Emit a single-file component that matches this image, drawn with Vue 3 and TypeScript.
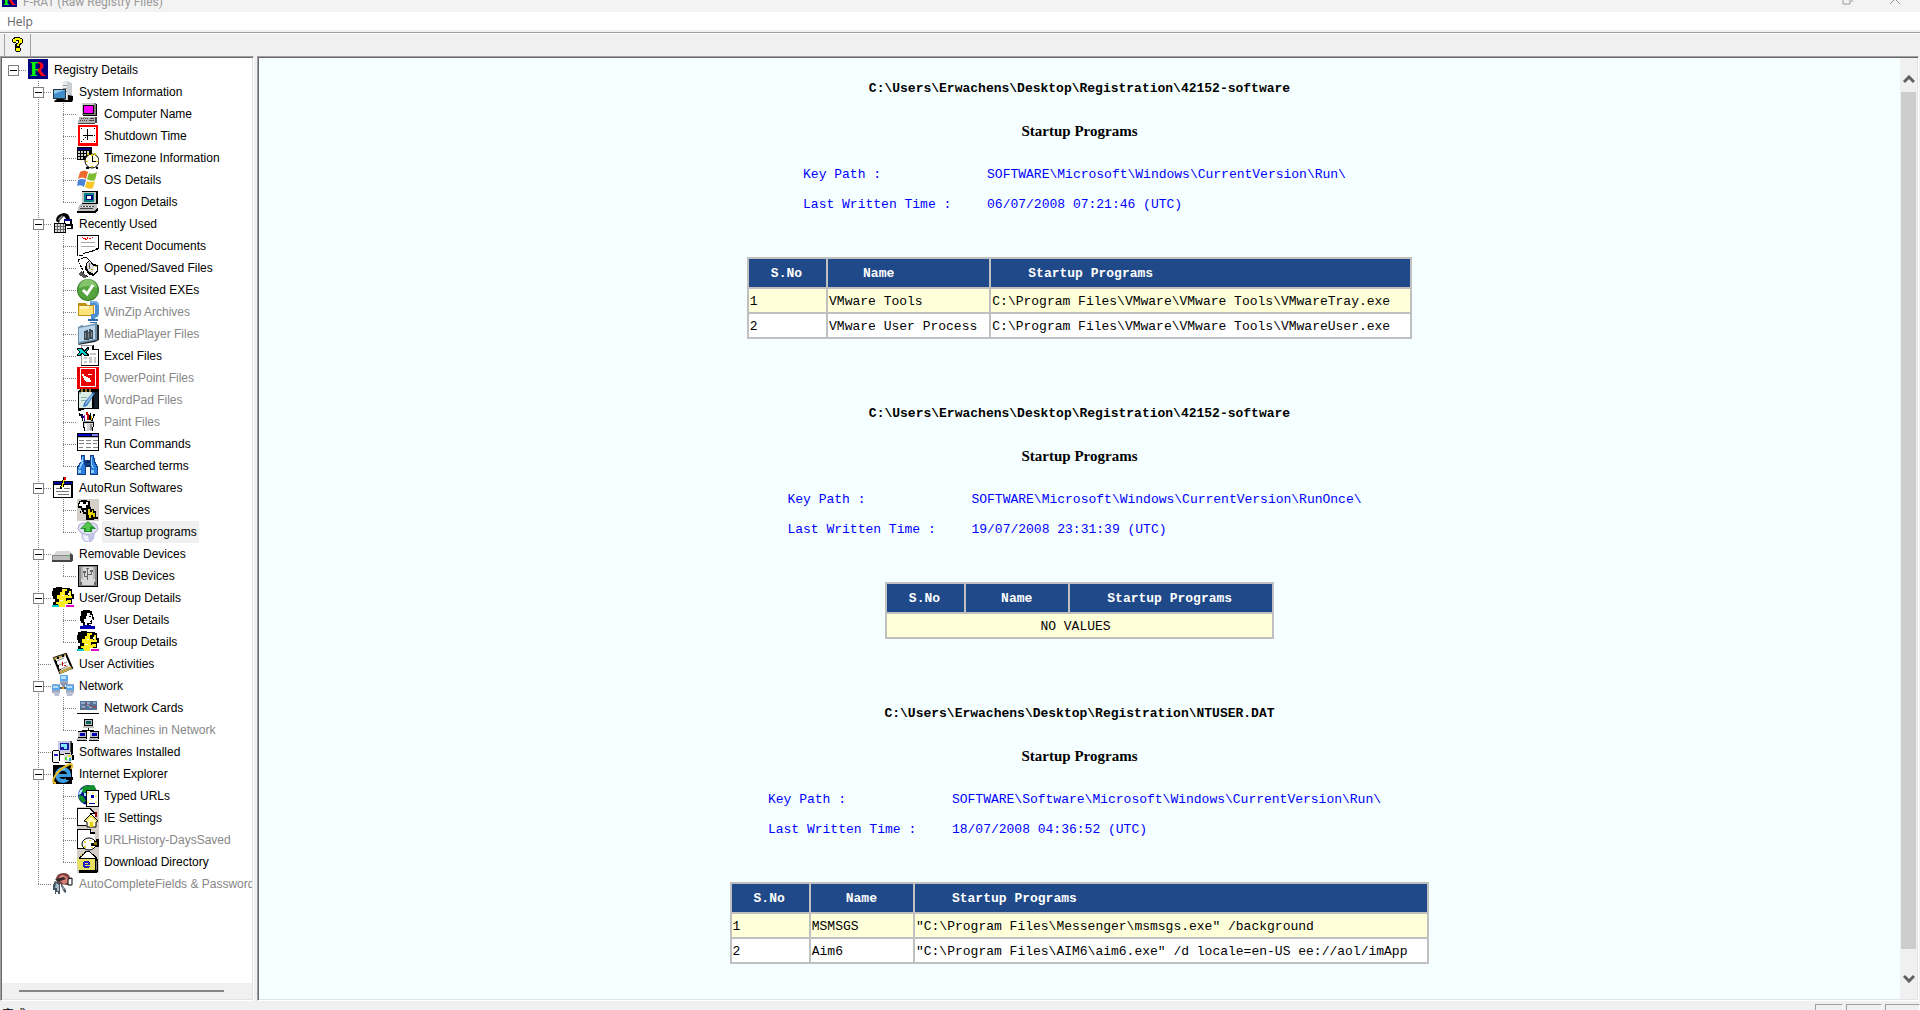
<script setup lang="ts">
import { computed, ref } from 'vue'

interface TreeItem {
  label: string
  level: 0 | 1 | 2
  icon: string
  off?: boolean
  parent?: boolean
}

interface Report {
  file: string
  keyPath: string
  written: string
  rows: [string, string][]
}

const icons: Record<string, string> = {
  computer: `<path fill="#808080" d="M5 0h14v12H5z"/><path fill="#c8c8c8" d="M5 0h12v11H5z"/><path fill="#000" d="M6 2h11v9H6zM19 1h1v12h-1zM6 12h13v1H6z"/><path fill="#f0f" d="M7 3h9v7H7z"/><path fill="#b4b4b4" d="M2 14h16v6H1v-3h1z"/><path fill="#fff" d="M2 13h15v1H2z"/><path fill="#444" d="M4 15h1v1H4zm2 0h1v1H6zm2 0h1v1H8zm2 0h1v1h-1zm3 0h4v1h-4zM3 17h1v1H3zm2 0h1v1H5zm2 0h1v1H7zm2 0h1v1H9zm3 0h5v1h-5zM1 20h17v1H1zM18 14h2v6h-2z"/>`,
  server: `<g shape-rendering="auto"><path fill="#c9ced2" d="M10 2l5-2 5 2v16l-5 2-5-2z"/><path fill="#eef1f3" d="M10 2l5-1v18l-5-2z"/><path fill="#8d959a" d="M11 4h4v1h-4zm0 3h4v1h-4zm0 3h4v1h-4z"/><path fill="#24323c" d="M1 8h13v10H1z"/><path fill="#3f8ccb" d="M2 9h11v8H2z"/><path fill="#8fc8ef" d="M2 9h11l-11 4z"/><path d="M16 14l5 1v4l-5 1zM2 20l3-2h6l4 1 6 0-1 2H3z"/></g>`,
  clock: `<path fill="#f00" d="M1 0h20v21H1z"/><path fill="#fff" d="M3 2h16v16H3z"/><path d="M10 4h1v6h5v1h-5v4h-1v-4H6v-1h4zM4 3h1v1H4zm13 0h1v1h-1zM4 16h1v1H4zm13 0h1v1h-1zM17 10h1v1h-1zM8 12h1v1H8zM6 14h1v1H6z"/>`,
  timezone: `<path d="M0 0h15v13H0z"/><path fill="#000080" d="M1 1h13v2H1z"/><path fill="#d0d0d0" d="M1 4h2v2H1zm3 0h2v2H4zm3 0h2v2H7zm3 0h2v2h-2zM1 7h2v2H1zm3 0h2v2H4zm3 0h2v2H7zM1 10h2v2H1zm3 0h2v2H4z"/><g shape-rendering="auto"><circle cx="15" cy="14" r="7" fill="#fffde8" stroke="#000"/></g><path fill="#d8c800" d="M10 6h2v2h-2zm7 0h2v2h-2zM14 7h2v2h-2zM9 14h2v1H9zm10 0h2v1h-2zM14 19h2v1h-2z"/><path d="M15 9h1v5h3v1h-4zM9 20h3v2H9zm10 0h2v2h-2z"/>`,
  windows: `<g shape-rendering="auto"><path fill="#ef6a2c" d="M3 3q4-3 8 0L9 10q-4-3-8 0z"/><path fill="#7dbb32" d="M12 4q4 2 8-1l-2 8q-4 2-8-1z"/><path fill="#4b83d6" d="M1 11q4-2 8 0l-2 7q-3-3-7-1z"/><path fill="#f8c828" d="M10 12q4 2 8 0l-2 7q-4 2-8-1z"/></g>`,
  logon: `<path d="M5 0h15l1 1v12H5z"/><path fill="#c0c8c8" d="M5 1h14v11H5z"/><path fill="#008080" d="M7 2h10v9H7z"/><path fill="#000080" d="M9 4h7v5H9z"/><path fill="#fff" d="M10 5h4v3h-4z"/><path fill="#c0c0c0" d="M3 13h17v5l-2 2H1v-3z"/><path fill="#444" d="M4 15h13v1H4zm-1 2h13v1H3z"/><path fill="#fff" d="M5 15h1v1H5zm3 0h1v1H8zm3 0h1v1h-1zm3 0h1v1h-1z"/><path d="M0 20h18l3-4v3l-2 3H0z"/>`,
  recent: `<g shape-rendering="auto"><path d="M4 8q0-7 8-8 5 0 6 6h-4l-2-3-4 4-1 3z"/><path fill="#777" d="M6 6l4-4 1 2-4 4z"/></g><path d="M12 6h8v7h-8z"/><path fill="#000080" d="M12 6h7v2h-7z"/><path fill="#fff" d="M13 8h5v3h-5z"/><path d="M9 10h5v2H9zM15 11h6v5h-6z"/><path fill="#fff" d="M15 13h4v2h-4z"/><path d="M2 10h12v10H2z"/><path fill="#ddd" d="M3 11h10v8H3z"/><path fill="#666" d="M3 13h10v1H3zm0 3h10v1H3zM5 11h1v8H5zm3 0h1v8H8zm3 0h1v8h-1z"/>`,
  docs: `<path fill="#fff" d="M1 1h20v14L8 20H1z"/><path d="M0 0h22v1H0zM0 0h1v21H0zM21 0h1v14h-1zM18 14h3v1h-3zM15 15h3v1h-3zM12 16h4v1h-4zM8 17h4v1H8zM6 18h2v1H6zM2 20h4v1H2zM19 13h2v2h-2z"/><path fill="#aaa" d="M4 7h14v1H4zm0 4h14v1H4z"/><path fill="#e00" d="M5 2h1v1H5zm2 1h2v1H7zm3-1h1v2h-1zm2 1h2v1h-2zm3-1h1v1h-1zM6 3h1v1H6zM8 4h2v1H8z"/>`,
  saved: `<path fill="none" stroke="#000" stroke-dasharray="2 1" d="M1 3l8-3 4 4M1 3l7 15 4 2"/><path d="M9 6l4-3 3 4 5 1v6l-4 5-5-1-4-6z"/><path fill="#ddd" d="M10 6l3-2 3 5 3 2-3 5-4-1-2-4z"/><path fill="#fff" d="M17 9h3v4l-3 4h-1z"/><path fill="#d9a400" d="M18 9h2v1h-2zm-4 3h2v1h-2z"/><path fill="#555" d="M1 17l3-3 7 6-4 1zM12 6h1v6h-1z"/>`,
  check: `<g shape-rendering="auto"><circle cx="11" cy="11" r="11" fill="#2f7d26"/><circle cx="11" cy="11" r="10" fill="#55a33c"/><path fill="#83c36c" d="M2 9a9 9 0 0118 0q-8-4-18 0z"/><path fill="none" stroke="#fff" stroke-width="3" d="M6 11l4 4 6-9"/></g>`,
  zip: `<path fill="#c48e13" d="M1 2h7l2 2h7v11H1z"/><path fill="#ffe27a" d="M2 5h14v9H2z"/><path fill="#fff3b8" d="M3 5h9v3H3z"/><g shape-rendering="auto"><path fill="none" stroke="#4b8fd0" stroke-width="4" d="M13 2h5q2 0 2 3v7q0 3-4 3v5"/><path fill="none" stroke="#a9d3f4" stroke-width="1" d="M13 1h6q2 0 2 3"/></g><path fill="#286aa8" d="M11 18h10v2H11zM13 21h7v1h-7z"/>`,
  media: `<g shape-rendering="auto"><path fill="#202830" d="M19 1l3 1v15l-4 2L1 22z"/><path fill="#6f8fa9" d="M1 4l4-2 2 1 13-3v17L1 21z"/><path fill="#b7d4ea" d="M2 5l16-3v14L2 19z"/></g><path fill="#3f4b52" d="M7 8h2v-1h2v2h1V6h2v1h2v9l-9 1z"/><path fill="#7e8d95" d="M8 10h1v5H8zm3 0h1v5h-1zm3-1h1v5h-1z"/>`,
  excel: `<path fill="#fff" d="M5 0h11l5 4v17H5z"/><path fill="#999" d="M4 0h1v21H4zM5 0h11v1H5z"/><path d="M16 0h1v4h4v1h-6V1zM21 4h1v17h-1zM4 20h18v1H4z"/><path fill="#c8c8c8" d="M7 8h5v2H7zm6 0h6v2h-6zm-6 4h3v2H7zm5 0h3v6h-3zm5 0h2v6h-2zm-10 4h3v2H7z"/><path d="M0 3h5l2 2 3-3h2v2L9 7l3 3v1H7L5 9l-2 2H0V9l2-2-2-2z"/><path fill="#00d0d0" d="M1 4h3l3 3 3-3h1L8 7l2 3H7L5 8l-3 2H1l2-3z"/>`,
  powerpoint: `<path fill="#e00" d="M0 0h22v22H0z"/><path fill="#800" d="M1 3h1v1H1zm0 5h1v1H1zm0 6h1v1H1zm19-9h1v1h-1zm0 7h1v1h-1zm0 6h1v1h-1zM9 20h1v1H9zm5 0h1v1h-1z"/><path fill="#fff" d="M3 1h16v1H3zm0 18h16v1H3zM3 2h1v17H3zm15 0h1v17h-1zM5 7h2v2h2v1h2v1h2v2h1v2H9v-1H8v-1H7v-2H6V9H5zM11 7h4v1h-4z"/>`,
  wordpad: `<path d="M3 0h19v20H9l-7 2H1V2z"/><path fill="#dcebe6" d="M2 3h13v16H2z"/><path fill="#8fb3a5" d="M2 3h2v2H2zM4 8h6v1H4zm0 3h5v1H4z"/><path fill="#8b7a3d" d="M4 0h2v3H4zm4 0h2v3H8zm4 0h2v3h-2z"/><path fill="#16202c" d="M17 3h4v16h-4z"/><g shape-rendering="auto"><path fill="#3978bf" d="M16 3l2 1-8 13-4 1 1-4z"/><path fill="#9ac5ec" d="M15 5l1 1-7 10-1-1z"/></g>`,
  paint: `<path d="M6 11h11v2l-1 7H7L6 13z"/><path fill="#d4d4d4" d="M7 12h9l-1 8H8z"/><path fill="#fff" d="M8 13h2v6H8z"/><path fill="#909090" d="M13 13h2v6h-2zM6 10h11v1H6z"/><path fill="#000080" d="M4 3h2v2h1v2h1v3H7V7H5V5H4z"/><path fill="#c00" d="M9 1h2v2h1v6h-2V4H9z"/><path d="M2 2h1v1h1v1h1v3h1v3H5V7H4V5H2zM13 2h1v7h-2V4h1zm3 1h2v2h-1v2h-1v3h-2V7h2z"/><path fill="#e0c000" d="M14 5h1v4h-1z"/><path fill="#a0a" d="M7 4h1v4H7z"/>`,
  run: `<path d="M0 0h22v18H0z"/><path fill="#fff" d="M1 4h20v13H1z"/><path fill="#0000c8" d="M1 1h13v2H1z"/><path fill="#8080ff" d="M15 1h6v2h-6z"/><path fill="#c0c0c0" d="M1 4h20v1H1z"/><path fill="#808080" d="M2 7h5v1H2zm7 0h5v1H9zm7 0h5v1h-5zM2 10h5v1H2zm7 0h5v1H9zm7 0h4v1h-4zM2 14h4v1H2zm7 0h5v1H9zm7 0h5v1h-5z"/>`,
  search: `<path fill="#123e86" d="M4 0h4v5h5V0h4l1 6 3 6v8h-8v-8H9v8H0v-8l4-6z"/><path fill="#2b80df" d="M5 1h2v6l1 5v7H1v-6l3-6zm9 0h2l1 6 3 6v6h-6v-7z"/><path fill="#91cbff" d="M5 2h1v6l-3 6H2l2-6zm9 0h1v7l2 4h-2l-1-4zM1 15h3v3H1zm13 0h3v3h-3z"/><path fill="#0c2c66" d="M9 6h4v2H9zM9 10h4v2H9z"/>`,
  autorun: `<path d="M1 4h20v17H1z"/><path fill="#0000a0" d="M2 5h18v2H2z"/><path fill="#fff" d="M2 8h17v12H2z"/><path fill="#777" d="M4 11h5v1H4zm8 0h6v1h-6zm-8 3h13v1H4zm2 3h11v1H6z"/><path d="M11 0h3v3h-1v3h-1v4h-2v2H8V9h1V6h1V3h1z"/><path fill="#f5e000" d="M11 3h2v1h-1v3h-1v3H9V9h1V6h1z"/><path fill="#e00" d="M12 0h2v3h-2z"/>`,
  services: `<path fill="#d4d0c8" d="M0 0h22v22H0z"/><path d="M2 2h2V1h6v1h3v7h-2v2H4V9H1V4h1z"/><path fill="#fff" d="M3 3h3v2h3V3h2v3H9v3H5V7H2V5h1z"/><path d="M9 9h2V8h3v2h3v2h2v7h-2v2h-6v-2H9z"/><path fill="#e4d100" d="M11 10h2v3h2v-2h1v3h2v4h-2v-2h-2v3h-2v-3h-1z"/><path d="M5 10h2v3h3v2H6v-2H5zM17 18h4v2h-4zM9 19h4v2H9zM3 12h1v2H3z"/>`,
  startup: `<g shape-rendering="auto"><path fill="#dfe0f2" stroke="#a9a9cc" d="M2 4l3-2h12l3 2 1 4-3 4-7 2-7-2-3-4z"/><path fill="#c3c5e4" d="M4 12l7 2 7-2-1 6-3 3H8l-3-3z"/><path fill="#f3f3ff" d="M6 14l5 1 1 5H9l-2-2z"/><path fill="#23912a" d="M11 0l8 8h-4v3H7V8H3z"/><path fill="#52c64d" d="M11 1l5 5h-3v4H9V7H5z"/></g>`,
  drive: `<g shape-rendering="auto"><path fill="#d8d8d8" d="M1 12l4-4h13l3 4z"/><path fill="#8a8a8a" d="M0 12h21v6H0z"/><path fill="#bcbcbc" d="M1 13h17v4H1z"/><path fill="#444" d="M18 10l3 2v6h-3zM0 17h20v2H0z"/></g><path fill="#40b840" d="M14 12h3v1h-3z"/>`,
  usb: `<path d="M1 0h20v22H1z"/><path fill="#888" d="M2 1h18v20H2z"/><path fill="#d8d8d8" d="M4 2h14v18H4z"/><path fill="#b4b4b4" d="M4 2h2v12H4zm12 0h2v12h-2z"/><path fill="#666" d="M10 4h1v11h-1zM7 7h1v4h3v1H7zM14 6h1v4h-4V9h3zM9 3h3v1H9zM6 6h3v2H6zm7-1h3v2h-3zM3 17h2v3H3zm14 0h2v3h-2z"/>`,
  group: `<path d="M1 1h3V0h6v1h8v1h2v5h2v5h-2v5h-7v3H1v-5h2v-3H1V9H0V4h1z"/><path fill="#ffed20" d="M10 2h5v2h-2v4h3v3h-2v3h2v3h-3v3H6v-3H4v-2h3v-3H5V8h3V5h2z"/><path fill="#ffed20" d="M17 4h2v5h1v2h-4V9h1zM15 13h4v3h-4z"/><path fill="#fff" d="M16 6h2v2h-2zM10 8h2v1h-2zM8 13h3v1H8z"/><path fill="#00d0d0" d="M0 18h7v2H0z"/><path fill="#e000c8" d="M14 18h8v2h-8z"/>`,
  user: `<path d="M4 2h2V1h7v1h2v3h1v3h1v3h-2v4h-3v2H6v-3H4v-2H3V7h1z"/><path fill="#fff" d="M10 4h3v2h2v4h1v1h-2v3h-4v2H8v-3H7v-3h2V7h1z"/><path d="M12 7h2v1h-2zM13 12h2v1h-2z"/><path fill="#0000a8" d="M3 17h3v-1h8v1h4v3H3z"/><path fill="#00c" d="M7 18h8v1H7z"/>`,
  activities: `<g shape-rendering="auto"><path fill="#fff" stroke="#000" stroke-width="2" d="M2 5l12-4 6 14-12 5z"/><path fill="#bba652" d="M1 5L14 1v2L3 7zM7 18l12-5 1 3-12 5z"/><path fill="none" stroke="#888" d="M5 8l7-3M7 12l8-3M9 16l7-3"/></g><path d="M4 8h1v2H4zM6 12h1v2H6zM8 16h1v1H8zM10 2h2v2h-2zM5 4h2v2H5z"/><path fill="#c00" d="M10 9h1v4h-1zM12 12h2v1h-2z"/>`,
  network: `<g shape-rendering="auto"><path fill="#9da8bf" d="M8 1h8v8H8zM0 9h8v9H0zM14 9h8v9h-8z"/><path fill="#5aa8ed" d="M8 0h8v6H8zM0 10h8v5H0zM14 10h8v5h-8z"/><path fill="#b8defb" d="M9 1h5v3H9zM1 11h5v2H1zM15 11h5v2h-5z"/><path fill="#8a92ae" d="M9 8h6v2H9zM10 9h3v3h-3z"/><path fill="#b9bfd2" d="M1 17h7l-1 4H3zM14 17h8l-2 4h-5z"/><path fill="#555" d="M8 12h6v2H8z"/><path fill="#e29b30" d="M10 12h2v2h-2z"/></g>`,
  card: `<path fill="#52749b" d="M3 4h17v9H3z"/><path fill="#91adcb" d="M4 5h4v2H4zm6 0h3v2h-3zm6 0h3v2h-3zM5 9h3v2H5zm7 0h3v2h-3z"/><path fill="#924e5d" d="M8 6h2v2H8zm5 2h2v2h-2zm-8 3h3v1H5zm11-2h3v2h-3z"/><path fill="#b9a7b9" d="M10 8h2v1h-2zm-6 0h1v1H4z"/><path d="M0 16h22v1H0z"/>`,
  machines: `<path d="M7 0h9v9H7z"/><path fill="#c0c0c0" d="M8 1h7v5H8zM6 7h11v2H6z"/><path fill="#006060" d="M9 2h5v3H9z"/><path d="M11 9h1v2h5v2h-1v-1H6v1H5v-2h6zM1 12h9v8H1zm12 0h9v8h-9z"/><path fill="#c0c0c0" d="M1 13h8v5H1zm12 0h8v5h-8zM0 19h9v2H0zm12 0h9v2h-9z"/><path fill="#0000b0" d="M3 14h5v3H3zm12 0h5v3h-5z"/><path d="M0 21h10v1H0zm12 0h10v1H12z"/>`,
  software: `<path fill="#555" d="M6 0h14v12H6z"/><path fill="#c8cde4" d="M6 0h12v11H6z"/><path fill="#1818a0" d="M8 2h9v7H8z"/><path fill="#80e8ff" d="M9 3h6v3H9zM12 6h3v2h-3z"/><path fill="#d0d0d8" d="M8 11h13v3H8z"/><path d="M19 2h2v11h-2zM8 13h12v1H8zM1 9h6v1H1zM0 10h1v11H0zM7 10h1v10H7zM1 21h6v1H1z"/><path fill="#f4f4f4" d="M1 10h6v11H1z"/><path fill="#2020c8" d="M2 13h4v2H2z"/><path d="M13 12h5v1h-5zM20 14h2v5h-2zM13 21h6v1h-6z"/><path fill="#d8dcd8" d="M12 13h7v1h1v6h-1v1h-6v-1h-1z"/><path fill="#50dc40" d="M13 16h2v3h-2z"/><path fill="#e5d830" d="M16 14h3v2h-3z"/><path fill="#20a8d0" d="M17 17h2v3h-2z"/><path fill="#fff" d="M15 16h2v2h-2z"/>`,
  ie: `<path d="M1 2h19v19H1z"/><g shape-rendering="auto"><circle cx="11" cy="12" r="6" fill="none" stroke="#3b9ce2" stroke-width="4"/><path fill="#3b9ce2" d="M7 11h12v3H7z"/><path d="M14 14h7v3h-7z"/><path fill="none" stroke="#a7daf9" d="M5 10q2-5 8-4"/><path fill="none" stroke="#e5bc2a" stroke-width="2" d="M4 20Q-1 20 3 13T18 1q4 0 1 5"/></g>`,
  typed: `<g shape-rendering="auto"><circle cx="11" cy="10" r="10" fill="#001090"/><path fill="#109028" d="M7 1l10-1 4 8-7 1-3-3-4 2-4-2zM2 10l4 1 3 5-3 2-4-4z"/><path fill="#b0e8ff" d="M3 5l3-1-2 5-3 1zM7 8h2v3H7z"/></g><path d="M9 5h13v17H9z"/><path fill="#fff" d="M10 6h11v15H10z"/><path fill="#ffef70" d="M10 7h2v2h-2zm5 0h2v2h-2zm3 3h2v2h-2zm-8 6h2v2h-2zm8 0h2v2h-2zM13 14h2v1h-2z"/><path fill="#0000a0" d="M14 10h3v3h-3zM12 18h6v1h-6z"/>`,
  home: `<path fill="#d4d0c8" d="M0 0h22v22H0z"/><path fill="#fff" d="M1 2h12l5 5v11H1z"/><path d="M0 1h1v18H0zM0 1h13v1H0zM0 18h9v1H0zM13 1l6 5v1h-6z"/><path fill="#fff" d="M13 3l3 3h-3z"/><g shape-rendering="auto"><path fill="#fff8b8" stroke="#000" d="M7 14l7-7 7 7-2 1v5h-9v-5z"/><path fill="none" stroke="#e2c900" d="M8 14l6-5 6 5"/></g><path fill="#e8d000" d="M13 15h3v5h-3z"/><path fill="#900" d="M18 5h2v5h-2z"/>`,
  history: `<path fill="#d4d0c8" d="M0 0h22v22H0z"/><path fill="#fff" d="M1 1h12l5 5v13H1z"/><path d="M0 0h13v1H0zM0 0h1v20H0zM13 0h1v3h4v2h-5zM0 19h7v1H0z"/><g shape-rendering="auto"><ellipse cx="12" cy="15" rx="7" ry="6" fill="#fff" stroke="#000"/></g><path fill="#e2d53d" d="M7 12h2v2H7zm5-1h2v1h-2zm-5 6h2v2H7zm7 1h2v1h-2z"/><path d="M14 14h3v-2h2v-2h3v8h-4v-1h-4z"/><path fill="#8c7600" d="M17 13h3v3h-3z"/>`,
  download: `<path fill="#d4d0c8" d="M0 0h22v22H0z"/><path d="M2 6l7-6h3l8 6v4H2z"/><path fill="#fff" d="M3 7l6-6h3l7 6z"/><path fill="#cabb45" d="M3 4h2v1H3zM5 2h2v1H5z"/><path d="M1 8h20v13l-2 1H2z"/><path fill="#e6df62" d="M0 8h18v11H1z"/><path fill="#2020c0" d="M7 10h5v1h1v3H8v1h5v1h-1v1H7v-1H6v-5h1zm1 2v1h3v-1z"/><path fill="#777" d="M19 10h1v9h-1z"/>`,
  password: `<g shape-rendering="auto"><path fill="#783e3c" d="M4 7q0-7 8-7 6 0 7 8l-3 4-9-1z"/><path fill="#d98277" d="M7 4q3-4 8 0l3 5-6 2-6-4z"/><path fill="#372a2a" d="M3 6l9-2 2 2-8 3z"/><path fill="#fff" stroke="#000" d="M16 6l4-1v7h-4z"/><path fill="#45545e" d="M3 8l5 2v11H6v-2H4v2H3v-4H1v-5zM9 10l5 7v3l-2-1-3-6z"/><path fill="#a7bac8" d="M4 10l3 2v6H5v-3H3zM10 12l3 5-2-1z"/></g>`,
}

const items: TreeItem[] = [
  { label: 'Registry Details', level: 0, icon: 'root', parent: true },
  { label: 'System Information', level: 1, icon: 'server', parent: true },
  { label: 'Computer Name', level: 2, icon: 'computer' },
  { label: 'Shutdown Time', level: 2, icon: 'clock' },
  { label: 'Timezone Information', level: 2, icon: 'timezone' },
  { label: 'OS Details', level: 2, icon: 'windows' },
  { label: 'Logon Details', level: 2, icon: 'logon' },
  { label: 'Recently Used', level: 1, icon: 'recent', parent: true },
  { label: 'Recent Documents', level: 2, icon: 'docs' },
  { label: 'Opened/Saved Files', level: 2, icon: 'saved' },
  { label: 'Last Visited EXEs', level: 2, icon: 'check' },
  { label: 'WinZip Archives', level: 2, icon: 'zip', off: true },
  { label: 'MediaPlayer Files', level: 2, icon: 'media', off: true },
  { label: 'Excel Files', level: 2, icon: 'excel' },
  { label: 'PowerPoint Files', level: 2, icon: 'powerpoint', off: true },
  { label: 'WordPad Files', level: 2, icon: 'wordpad', off: true },
  { label: 'Paint Files', level: 2, icon: 'paint', off: true },
  { label: 'Run Commands', level: 2, icon: 'run' },
  { label: 'Searched terms', level: 2, icon: 'search' },
  { label: 'AutoRun Softwares', level: 1, icon: 'autorun', parent: true },
  { label: 'Services', level: 2, icon: 'services' },
  { label: 'Startup programs', level: 2, icon: 'startup' },
  { label: 'Removable Devices', level: 1, icon: 'drive', parent: true },
  { label: 'USB Devices', level: 2, icon: 'usb' },
  { label: 'User/Group Details', level: 1, icon: 'group', parent: true },
  { label: 'User Details', level: 2, icon: 'user' },
  { label: 'Group Details', level: 2, icon: 'group' },
  { label: 'User Activities', level: 1, icon: 'activities' },
  { label: 'Network', level: 1, icon: 'network', parent: true },
  { label: 'Network Cards', level: 2, icon: 'card' },
  { label: 'Machines in Network', level: 2, icon: 'machines', off: true },
  { label: 'Softwares Installed', level: 1, icon: 'software' },
  { label: 'Internet Explorer', level: 1, icon: 'ie', parent: true },
  { label: 'Typed URLs', level: 2, icon: 'typed' },
  { label: 'IE Settings', level: 2, icon: 'home' },
  { label: 'URLHistory-DaysSaved', level: 2, icon: 'history', off: true },
  { label: 'Download Directory', level: 2, icon: 'download' },
  { label: 'AutoCompleteFields & Passwords', level: 1, icon: 'password', off: true },
]

const reports: Report[] = [
  {
    file: 'C:\\Users\\Erwachens\\Desktop\\Registration\\42152-software',
    keyPath: 'SOFTWARE\\Microsoft\\Windows\\CurrentVersion\\Run\\',
    written: '06/07/2008 07:21:46 (UTC)',
    rows: [
      ['VMware Tools', 'C:\\Program Files\\VMware\\VMware Tools\\VMwareTray.exe'],
      ['VMware User Process', 'C:\\Program Files\\VMware\\VMware Tools\\VMwareUser.exe'],
    ],
  },
  {
    file: 'C:\\Users\\Erwachens\\Desktop\\Registration\\42152-software',
    keyPath: 'SOFTWARE\\Microsoft\\Windows\\CurrentVersion\\RunOnce\\',
    written: '19/07/2008 23:31:39 (UTC)',
    rows: [],
  },
  {
    file: 'C:\\Users\\Erwachens\\Desktop\\Registration\\NTUSER.DAT',
    keyPath: 'SOFTWARE\\Software\\Microsoft\\Windows\\CurrentVersion\\Run\\',
    written: '18/07/2008 04:36:52 (UTC)',
    rows: [
      ['MSMSGS', '"C:\\Program Files\\Messenger\\msmsgs.exe" /background'],
      ['Aim6', '"C:\\Program Files\\AIM6\\aim6.exe" /d locale=en-US ee://aol/imApp'],
    ],
  },
]

const selected = ref('Startup programs')
const closed = ref(new Set<string>())

function toggle(label: string) {
  const next = new Set(closed.value)
  if (!next.delete(label)) next.add(label)
  closed.value = next
}

// Which connector each indent column of a row shows
function guides(i: number): string[] {
  const item = items[i]
  if (item.level === 0) return ['stub']
  if (item.level === 1) return ['blank', i === items.length - 1 ? 'end' : 'tee']
  const following = items[i + 1]
  return ['blank', 'pass', following && following.level === 2 ? 'tee' : 'end']
}

const rows = computed(() => {
  let hidden = false
  return items
    .map((item, i) => ({ item, guides: guides(i) }))
    .filter(({ item }) => {
      if (item.level === 0) return true
      if (closed.value.has(items[0].label)) return false
      if (item.level === 1) {
        hidden = closed.value.has(item.label)
        return true
      }
      return !hidden
    })
})
</script>

<template>
  <div class="window">
    <header class="titlebar">
      <svg class="app-icon" viewBox="0 0 20 20" aria-hidden="true">
        <defs>
          <linearGradient id="logo" gradientUnits="userSpaceOnUse" x1="0" x2="20" y1="0" y2="0">
            <stop offset="0.48" stop-color="#0f0" />
            <stop offset="0.48" stop-color="#f00" />
          </linearGradient>
        </defs>
        <rect width="20" height="20" fill="#000080" />
        <text x="2" y="17" class="logo" fill="url(#logo)">R</text>
      </svg>
      <span class="title">F-RAT (Raw Registry Files)</span>
      <button class="caption" aria-label="Restore">
        <svg viewBox="0 0 12 12"><path d="M1 3h7v8H1zM3 1h7v8" /></svg>
      </button>
      <button class="caption" aria-label="Close">
        <svg viewBox="0 0 12 12"><path d="M1 1l10 10M11 1L1 11" /></svg>
      </button>
    </header>

    <nav class="menubar"><button class="menu">Help</button></nav>

    <div class="toolbar">
      <button class="tool" aria-label="Help">
        <svg viewBox="0 0 11 15" shape-rendering="crispEdges">
          <path d="M2 0h6v1h2v1h1v4h-1v1H9v1H8v2H3V7h1V6h2V4H4v2H1V5H0V2h1V1h1zM3 10h5v1h1v3H8v1H4v-1H3z" />
          <path fill="#ff0" d="M3 1h5v1h2v4H8v1H7v2H5V7h1V6h1V3H4v2H1V2h2zM4 11h4v3H4z" />
        </svg>
      </button>
    </div>

    <main class="panes">
      <aside class="sidebar">
        <ul class="tree" role="tree">
          <li v-for="row in rows" :key="row.item.label" class="node" role="treeitem">
            <span v-for="(g, k) in row.guides" :key="k" class="guide" :class="g">
              <button
                v-if="row.item.parent && k === row.guides.length - 1"
                class="expander"
                :class="{ plus: closed.has(row.item.label) }"
                :aria-label="'Toggle ' + row.item.label"
                @click="toggle(row.item.label)"
              ></button>
            </span>
            <svg v-if="row.item.icon === 'root'" class="icon" viewBox="-1 0 22 22" aria-hidden="true">
              <rect width="20" height="20" fill="#000080" />
              <text x="2" y="17" class="logo" fill="url(#logo)">R</text>
            </svg>
            <svg v-else class="icon" viewBox="0 0 22 22" shape-rendering="crispEdges" aria-hidden="true" v-html="icons[row.item.icon]"></svg>
            <button
              class="label"
              :class="{ off: row.item.off, selected: selected === row.item.label }"
              @click="selected = row.item.label"
            >{{ row.item.label }}</button>
          </li>
        </ul>
        <div class="hscroll"><div class="hthumb"></div></div>
      </aside>

      <section class="viewer">
        <div class="report">
          <article v-for="(r, n) in reports" :key="n" class="entry">
            <h2 class="file">{{ r.file }}</h2>
            <h3 class="heading">Startup Programs</h3>
            <dl class="meta">
              <dt>Key Path :</dt>
              <dd>{{ r.keyPath }}</dd>
              <dt>Last Written Time :</dt>
              <dd>{{ r.written }}</dd>
            </dl>
            <table class="data">
              <thead>
                <tr>
                  <th class="c-no">S.No</th>
                  <th class="c-name">Name</th>
                  <th class="c-prog">Startup Programs</th>
                </tr>
              </thead>
              <tbody>
                <tr v-for="(v, k) in r.rows" :key="k">
                  <td>{{ k + 1 }}</td>
                  <td class="v-name">{{ v[0] }}</td>
                  <td class="v-prog">{{ v[1] }}</td>
                </tr>
                <tr v-if="!r.rows.length">
                  <td colspan="3" class="none">NO VALUES</td>
                </tr>
              </tbody>
            </table>
          </article>
        </div>
        <div class="vscroll">
          <button class="arrow" aria-label="Scroll up">
            <svg viewBox="0 0 12 9"><path d="M1 7l5-5 5 5" /></svg>
          </button>
          <div class="vthumb"></div>
          <button class="arrow" aria-label="Scroll down">
            <svg viewBox="0 0 12 9"><path d="M1 2l5 5 5-5" /></svg>
          </button>
        </div>
      </section>
    </main>

    <footer class="status">
      <span class="message">完成</span>
      <span class="cell small"></span>
      <span class="cell medium"></span>
      <span class="cell"></span>
    </footer>
  </div>
</template>

<style>
body {
  margin: 0;
  overflow: hidden;
}
</style>

<style scoped>
.window {
  display: flex;
  flex-direction: column;
  height: 100vh;
  background: #f0f0f0;
  color: #000;
  font: 12px "Liberation Sans", Arial, sans-serif;
}
button {
  margin: 0;
  padding: 0;
  border: 0;
  background: none;
  color: inherit;
  font: inherit;
}
svg {
  display: block;
}

.titlebar {
  display: flex;
  align-items: flex-end;
  height: 12px;
  flex: none;
  overflow: hidden;
  background: #f3f3f3;
  color: #999;
  padding: 0 19px 0 2px;
}
.app-icon {
  width: 15px;
  height: 15px;
  margin: 0 6px 5px 0;
  flex: none;
}
.title {
  flex: 1;
  font: 12px/20px Roboto, "Noto Sans", sans-serif;
}
.caption {
  width: 12px;
  height: 12px;
  margin: 0 0 7px 35px;
}
.caption svg {
  width: 12px;
  height: 12px;
  fill: none;
  stroke: #999;
}
.logo {
  font: bold 21px "Liberation Serif", serif;
}

.menubar {
  height: 18px;
  flex: none;
  background: #fff;
  border-bottom: 2px solid #f0f0f0;
}
.menu {
  padding: 0 7px;
  color: #666;
  font: 12px/20px "Open Sans", "Noto Sans", sans-serif;
}

.toolbar {
  display: flex;
  height: 22px;
  flex: none;
  padding: 1px 0 0 4px;
  border-top: 1px solid #a0a0a0;
  box-shadow: inset 0 1px #fff;
}
.tool {
  display: flex;
  justify-content: center;
  align-items: flex-start;
  width: 27px;
  padding-top: 3px;
  border-left: 1px solid #a0a0a0;
  border-right: 1px solid #a0a0a0;
}
.tool svg {
  width: 11px;
  height: 15px;
}

.panes {
  display: flex;
  flex: 1;
  min-height: 0;
  gap: 3px;
  padding-right: 1px;
}
.sidebar,
.viewer {
  box-sizing: border-box;
  border: 1px solid #a0a0a0;
  border-color: #a0a0a0 #fff #fff #a0a0a0;
  box-shadow: inset 1px 1px #696969, inset -1px -1px #e3e3e3;
  padding: 1px;
}
.sidebar {
  display: flex;
  flex-direction: column;
  width: 254px;
  flex: none;
  background: #fff;
}
.tree {
  flex: 1;
  min-height: 0;
  margin: 0;
  padding: 1px 0 0;
  overflow: hidden;
  list-style: none;
}
.node {
  display: flex;
  height: 22px;
  white-space: nowrap;
}
.guide {
  width: 25px;
  height: 22px;
  flex: none;
  padding: 6px 0 0 6px;
  box-sizing: border-box;
  background-repeat: no-repeat;
}
.stub {
  background-image: repeating-linear-gradient(to right, #808080 0 1px, transparent 1px 2px);
  background-position: 11px 11px;
  background-size: 14px 1px;
}
.pass {
  background-image: repeating-linear-gradient(to bottom, #808080 0 1px, transparent 1px 2px);
  background-position: 11px 0;
  background-size: 1px 22px;
}
.tee,
.end {
  background-image:
    repeating-linear-gradient(to bottom, #808080 0 1px, transparent 1px 2px),
    repeating-linear-gradient(to right, #808080 0 1px, transparent 1px 2px);
  background-position: 11px 0, 11px 11px;
  background-size: 1px 22px, 14px 1px;
}
.end {
  background-size: 1px 12px, 14px 1px;
}
.expander {
  display: block;
  width: 11px;
  height: 11px;
  border: 1px solid #808080;
  background: linear-gradient(#000, #000) center / 7px 1px no-repeat #fff;
}
.expander.plus {
  background:
    linear-gradient(#000, #000) center / 7px 1px no-repeat,
    linear-gradient(#000, #000) center / 1px 7px no-repeat #fff;
}
.icon {
  width: 22px;
  height: 22px;
  flex: none;
}
.label {
  margin-left: 3px;
  padding: 0 2px;
  height: 22px;
}
.label.off {
  color: #868686;
}
.label.selected {
  background: #f0f0f0;
}
.hscroll {
  height: 16px;
  flex: none;
  padding: 0 28px 0 17px;
  background: #f0f0f0;
  display: flex;
  align-items: center;
}
.hthumb {
  flex: 1;
  height: 2px;
  background: #868686;
}

.viewer {
  display: flex;
  flex: 1;
  min-width: 0;
  background: #f5ffff;
}
.report {
  flex: 1;
  min-width: 0;
  overflow: hidden;
  padding-top: 23px;
  font: 13px/16px "Liberation Mono", "Courier New", monospace;
}
.entry {
  display: flex;
  flex-direction: column;
  align-items: center;
  margin-bottom: 67px;
}
.file {
  margin: 0;
  font: inherit;
  font-weight: bold;
}
.heading {
  margin: 24px 0 19px;
  font: bold 15px/20px "Liberation Serif", "Times New Roman", serif;
}
.meta {
  display: grid;
  grid-template-columns: 152px auto;
  column-gap: 32px;
  margin: 0 0 37px;
  line-height: 30px;
  color: #00f;
}
.meta dd {
  margin: 0;
  padding-right: 10px;
}
.data {
  border-spacing: 2px;
  background: #c0c0c0;
}
.data th,
.data td {
  box-sizing: border-box;
  padding: 2px 9px 0 1px;
}
.data th {
  height: 28px;
  background: #1f4988;
  color: #fff;
  text-align: left;
}
.data .c-no {
  padding-left: 22px;
  padding-right: 24px;
}
.data .c-name {
  padding-left: 35px;
  padding-right: 36px;
}
.data .c-prog {
  padding-left: 37px;
  padding-right: 40px;
}
.data td {
  height: 23px;
  background: #fff;
}
.data .v-name {
  padding-right: 12px;
}
.data .v-prog {
  padding-right: 20px;
}
.data tr:first-child td {
  background: #ffffd9;
}
.data .none {
  text-align: center;
}

.vscroll {
  display: flex;
  flex-direction: column;
  width: 17px;
  flex: none;
  background: #f0f0f0;
}
.arrow {
  display: flex;
  justify-content: center;
  align-items: center;
  height: 50px;
  padding-top: 8px;
}
.arrow svg {
  width: 12px;
  height: 9px;
  fill: none;
  stroke: #606060;
  stroke-width: 3px;
}
.arrow:first-child {
  height: 34px;
}
.vthumb {
  flex: 1;
  margin: 0 1px;
  background: #cdcdcd;
}

.status {
  display: flex;
  height: 9px;
  flex: none;
  overflow: hidden;
  gap: 3px;
}
.message {
  flex: 1;
  padding: 5px 0 0 2px;
  font: 12px/16px "Noto Sans CJK SC", sans-serif;
}
.cell {
  width: 35px;
  height: 20px;
  margin-top: 3px;
  box-sizing: border-box;
  border: 1px solid #a0a0a0;
  border-right-color: #fff;
}
.cell.small {
  width: 28px;
}
.cell.medium {
  width: 36px;
}
</style>
